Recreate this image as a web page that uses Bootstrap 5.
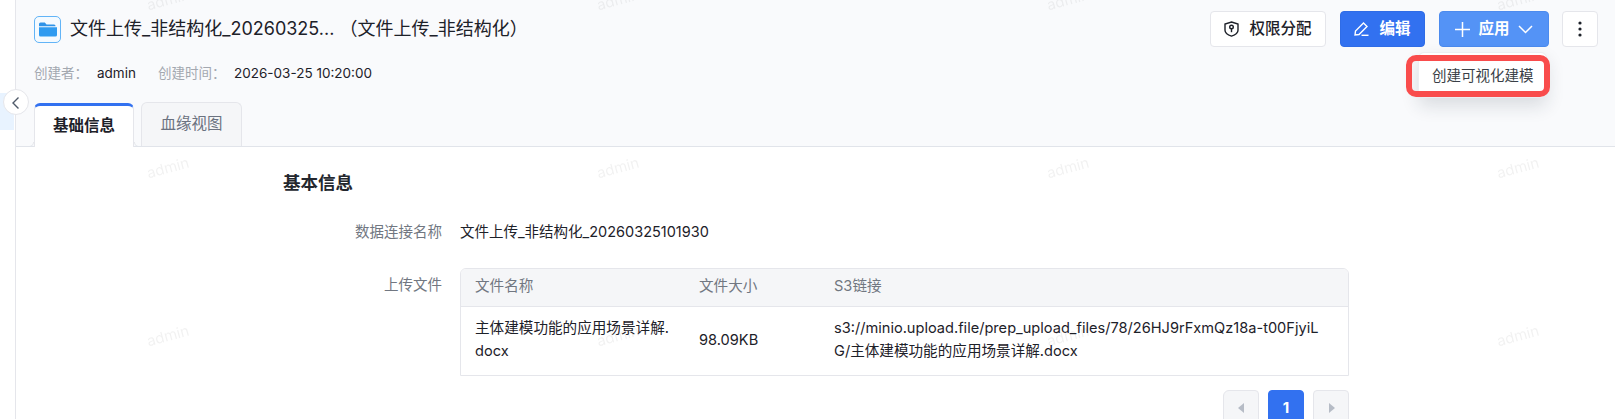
<!DOCTYPE html>
<html lang="zh-CN">

<head>
    <meta charset="UTF-8">
    <meta name="viewport" content="width=device-width, initial-scale=1.0">
    <link href="https://cdn.jsdelivr.net/npm/bootstrap@5.3.0/dist/css/bootstrap.min.css" rel="stylesheet">
    <title>文件上传_非结构化</title>
    <style>
        body {
            height: 419px;
            overflow: hidden;
            background: #fff;
            color: #1d2129;
            font-family: Inter, "Noto Sans CJK SC", sans-serif;
            font-size: 14.5px;
        }

        .side-strip {
            width: 16px;
            flex: none;
            border-right: 1px solid #e5e6eb;
        }

        .side-active {
            height: 37px;
            margin-top: 93px;
            margin-right: 1px;
            background: #e8f3ff;
        }

        .collapse-btn {
            position: absolute;
            left: 3px;
            top: 89px;
            width: 26px;
            height: 26px;
            padding: 0;
            border: 1px solid #e5e6eb;
            border-radius: 50%;
            background: #fff;
            line-height: 1;
            z-index: 3;
        }

        .page-head {
            height: 147px;
            padding: 11px 17px 0 18px;
            background: #f9fafc;
            border-bottom: 1px solid #e1e4ea;
        }

        .file-icon {
            width: 27px;
            height: 27px;
            flex: none;
            border: 1px solid #62b4f7;
            border-radius: 5px;
            background: #f4faff;
        }

        .head-title {
            font-size: 18px;
            font-weight: 400;
            margin: 0 0 0 9px;
        }

        .head-actions {
            gap: 14px;
        }

        .head-btn {
            height: 36px;
            padding: 0;
            font-size: 15.5px;
            font-weight: 500;
            border-radius: 4px;
            display: flex;
            align-items: center;
            justify-content: center;
            white-space: nowrap;
        }

        .btn-plain {
            background: #fff;
            border: 1px solid #e5e6eb;
            color: #1d2129;
        }

        .btn-solid {
            background: #3271f0;
            border: 1px solid #2f6ce6;
            color: #fff;
            font-weight: 700;
        }

        .btn-soft {
            background: #5493f6;
            border: 1px solid #4c8bee;
            color: #fff;
            font-weight: 700;
        }

        .btn-perm {
            width: 116px;
        }

        .btn-edit {
            width: 85px;
        }

        .btn-apply {
            width: 110px;
        }

        .btn-more {
            width: 36px;
        }

        .btn-glyph {
            margin-right: 10px;
        }

        .meta-row {
            margin-top: 16px;
            height: 20px;
            line-height: 20px;
            font-size: 13.5px;
        }

        .meta-label {
            color: #a3a8b0;
        }

        .meta-who {
            width: 63px;
        }

        .meta-name {
            width: 61px;
        }

        .meta-when {
            width: 76px;
        }

        .tab-row {
            margin-top: 19px;
            border-bottom: 0;
            gap: 7px;
        }

        .tab-row .nav-link {
            height: 44px;
            padding: 0 18px;
            margin: 0;
            line-height: 42px;
            font-size: 15.5px;
            color: #6b7280;
            background: #f5f6f8;
            border: 1px solid #e5e6eb;
            border-bottom: 0;
            border-radius: 6px 6px 0 0;
        }

        .tab-row .nav-link.active {
            position: relative;
            height: 44px;
            margin-top: 1px;
            padding-top: 0;
            line-height: 40px;
            font-weight: 700;
            color: #1d2129;
            background: #fff;
            border-top: 3px solid #3271f0;
            border-color: #3271f0 #e5e6eb transparent;
        }

        .tab-row .nav-link.active::before,
        .tab-row .nav-link.active::after {
            content: "";
            position: absolute;
            bottom: 0;
            width: 5px;
            height: 5px;
            border-bottom: 1px solid #e1e4ea;
        }

        .tab-row .nav-link.active::before {
            left: -6px;
            border-right: 1px solid #e5e6eb;
            border-bottom-right-radius: 5px;
        }

        .tab-row .nav-link.active::after {
            right: -6px;
            border-left: 1px solid #e5e6eb;
            border-bottom-left-radius: 5px;
        }

        .tab-row .nav-item:first-child {
            width: 100px;
        }

        .tab-row .nav-item:nth-child(2) {
            width: 101px;
        }

        .apply-menu {
            position: relative;
            margin-right: -1px;
        }

        .apply-menu .dropdown-menu {
            top: 41px;
            right: 2px;
            left: auto;
            width: 129px;
            min-width: 0;
            height: 46px;
            padding: 12px 0 0 13px;
            margin: 0;
            font-size: 14.5px;
            line-height: 22px;
            color: #3a3f47;
            border: 1px solid #eceef2;
            border-radius: 6px;
            box-shadow: 0 8px 18px rgba(30, 40, 60, .14);
        }

        .mark-box {
            position: absolute;
            top: 44px;
            right: -1px;
            width: 144px;
            height: 42px;
            border: 6px solid #f94c4c;
            border-radius: 10px;
            z-index: 1001;
            pointer-events: none;
        }

        .info-body {
            padding: 24px 0 0 267px;
        }

        .info-title {
            font-size: 17.5px;
            font-weight: 700;
            line-height: 24px;
            margin: 0 0 26px;
            color: #23272e;
        }

        .info-row {
            display: flex;
            gap: 18px;
            width: 1066px;
        }

        .info-label {
            width: 159px;
            flex: none;
            text-align: right;
            color: #717781;
            line-height: 22px;
        }

        .info-value {
            line-height: 22px;
        }

        .upload-row {
            margin-top: 25px;
        }

        .upload-row .info-label {
            padding-top: 6px;
        }

        .upload-wrap {
            flex: 1;
            min-width: 0;
        }

        .file-table {
            border: 1px solid #e5e6eb;
            border-radius: 6px 6px 0 0;
            overflow: hidden;
        }

        .file-table .table {
            table-layout: fixed;
            margin: 0;
            font-size: 14.6px;
            --bs-table-color: #1d2129;
        }

        .col-file {
            width: 224px;
        }

        .col-size {
            width: 135px;
        }

        .file-table th {
            height: 37px;
            padding: 0 14px;
            vertical-align: middle;
            font-weight: 400;
            color: #717781;
            background: #f5f6f8;
            border-bottom: 1px solid #e5e6eb;
        }

        .file-table td {
            height: 69px;
            padding: 0 14px 1px;
            vertical-align: middle;
            line-height: 23px;
            word-break: break-all;
            border-bottom: 0;
        }

        .pager {
            gap: 9px;
            margin: 14px 0 0;
        }

        .pager .page-link,
        .pager .page-item:not(:first-child) .page-link {
            width: 36px;
            height: 36px;
            margin-left: 0;
            padding: 0;
            display: flex;
            align-items: center;
            justify-content: center;
            border-radius: 4px;
            border: 1px solid #e5e6eb;
            background: #f5f6f8;
        }

        .pager .page-item.active .page-link {
            background: #3271f0;
            border-color: #3271f0;
            color: #fff;
            font-weight: 700;
            font-size: 15px;
        }

        .wm-layer {
            position: fixed;
            inset: 0;
            pointer-events: none;
            z-index: 2000;
        }

        .wm-text {
            position: absolute;
            width: 60px;
            margin-left: -30px;
            margin-top: -12px;
            line-height: 24px;
            text-align: center;
            font-size: 15px;
            color: rgba(0, 0, 0, .055);
            transform: rotate(-15deg);
        }
    </style>
</head>

<body>

    <div class="d-flex">
        <aside class="side-strip">
            <div class="side-active"></div>
        </aside>
        <button class="collapse-btn" type="button" aria-label="收起">
            <svg width="12" height="14" viewBox="0 0 12 14" fill="none" stroke="#4e5969" stroke-width="1.4">
                <path d="M8.500 1.500 3 7l5.500 5.500" />
            </svg>
        </button>

        <main class="flex-grow-1">
            <div class="page-head">
                <div class="d-flex align-items-center">
                    <div class="d-flex align-items-center flex-grow-1">
                        <span class="file-icon d-flex align-items-center justify-content-center">
                            <svg width="18" height="15" viewBox="0 0 18 15">
                                <path fill="#2f93e8" d="M0 2a1.500 1.500 0 0 1 1.500-1.500h4.300l1.700 1.900H15A1.500 1.500 0 0 1 16.500 4v.3H0z" />
                                <path fill="#2f9bf0" d="M0 5.300h18v7.700a1.600 1.600 0 0 1-1.600 1.600H1.600A1.600 1.600 0 0 1 0 13z" />
                            </svg>
                        </span>
                        <h1 class="head-title">文件上传_非结构化_20260325... （文件上传_非结构化）</h1>
                    </div>
                    <div class="d-flex head-actions">
                        <button class="btn head-btn btn-plain btn-perm" type="button">
                            <svg class="btn-glyph" width="15" height="16" viewBox="0 0 15 16" fill="none" stroke="#1d2129" stroke-width="1.400">
                                <path d="M7.500 1 14 3v6.200c0 2.400-3 4.800-6.500 5.900C4 14 1 11.600 1 9.200V3z" />
                                <circle cx="7.500" cy="6" r="1.800" />
                                <path d="M7.500 7.800v3.400" />
                            </svg>
                            权限分配
                        </button>
                        <button class="btn head-btn btn-solid btn-edit" type="button">
                            <svg class="btn-glyph" width="15" height="14" viewBox="0 0 15 14" fill="none" stroke="#fff" stroke-width="1.400">
                                <path d="M1 13 1.500 9 9.500 1l3.500 3.500L5 12.500z" />
                                <path d="M7.500 13.300h7" />
                            </svg>
                            编辑
                        </button>
                        <div class="apply-menu">
                            <button class="btn head-btn btn-soft btn-apply" type="button">
                                <svg class="me-2" width="15" height="15" viewBox="0 0 15 15" fill="none" stroke="#fff" stroke-width="1.500">
                                    <path d="M7.500 0v15M0 7.500h15" />
                                </svg>
                                应用
                                <svg class="ms-2" width="15" height="9" viewBox="0 0 15 9" fill="none" stroke="#fff" stroke-width="1.500">
                                    <path d="M1 1l6.500 6.500L14 1" />
                                </svg>
                            </button>
                            <div class="dropdown-menu show">创建可视化建模</div>
                            <div class="mark-box"></div>
                        </div>
                        <button class="btn head-btn btn-plain btn-more" type="button" aria-label="更多">
                            <svg width="4" height="16" viewBox="0 0 4 16" fill="#1d2129">
                                <circle cx="2" cy="2" r="1.600" />
                                <circle cx="2" cy="8" r="1.600" />
                                <circle cx="2" cy="14" r="1.600" />
                            </svg>
                        </button>
                    </div>
                </div>

                <div class="d-flex meta-row">
                    <span class="meta-label meta-who">创建者：</span>
                    <span class="meta-name">admin</span>
                    <span class="meta-label meta-when">创建时间：</span>
                    <span>2026-03-25 10:20:00</span>
                </div>

                <ul class="nav nav-tabs tab-row">
                    <li class="nav-item"><a class="nav-link active text-center" href="#">基础信息</a></li>
                    <li class="nav-item"><a class="nav-link text-center" href="#">血缘视图</a></li>
                </ul>
            </div>

            <div class="info-body">
                <h2 class="info-title">基本信息</h2>
                <div class="info-row">
                    <div class="info-label">数据连接名称</div>
                    <div class="info-value">文件上传_非结构化_20260325101930</div>
                </div>
                <div class="info-row upload-row">
                    <div class="info-label">上传文件</div>
                    <div class="upload-wrap">
                        <div class="file-table">
                            <table class="table">
                                <colgroup>
                                    <col class="col-file">
                                    <col class="col-size">
                                    <col>
                                </colgroup>
                                <thead>
                                    <tr>
                                        <th>文件名称</th>
                                        <th>文件大小</th>
                                        <th>S3链接</th>
                                    </tr>
                                </thead>
                                <tbody>
                                    <tr>
                                        <td>主体建模功能的应用场景详解.docx</td>
                                        <td>98.09KB</td>
                                        <td>s3://minio.upload.file/prep_upload_files/78/26HJ9rFxmQz18a-t00FjyiLG/主体建模功能的应用场景详解.docx</td>
                                    </tr>
                                </tbody>
                            </table>
                        </div>
                        <ul class="pagination justify-content-end pager">
                            <li class="page-item disabled"><a class="page-link" href="#" aria-label="上一页">
                                <svg width="7" height="10" viewBox="0 0 7 10" fill="#b6bcc6"><path d="M6 0v10L0 5z" /></svg>
                            </a></li>
                            <li class="page-item active"><a class="page-link" href="#">1</a></li>
                            <li class="page-item disabled"><a class="page-link" href="#" aria-label="下一页">
                                <svg width="7" height="10" viewBox="0 0 7 10" fill="#b6bcc6"><path d="M1 0v10l6-5z" /></svg>
                            </a></li>
                        </ul>
                    </div>
                </div>
            </div>
        </main>
    </div>

    <div class="wm-layer" id="wm-layer"></div>

    <script>
        // marca d'água: grade fixa de 450 x 168
        const layer = document.getElementById('wm-layer');
        [0, 168, 336].forEach(y => {
            [168, 618, 1068, 1518].forEach(x => {
                const el = document.createElement('span');
                el.className = 'wm-text';
                el.textContent = 'admin';
                el.style.left = x + 'px';
                el.style.top = y + 'px';
                layer.appendChild(el);
            });
        });
    </script>
    <script src="https://cdn.jsdelivr.net/npm/bootstrap@5.3.0/dist/js/bootstrap.bundle.min.js"></script>

</body>

</html>
